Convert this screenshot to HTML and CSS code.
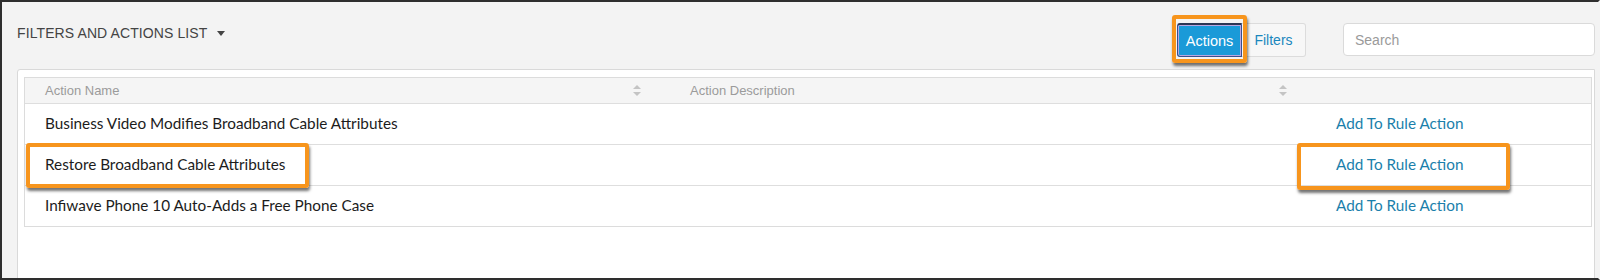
FILE: index.html
```html
<!DOCTYPE html>
<html>
<head>
<meta charset="utf-8">
<link rel="stylesheet" href="styles.css">
</head>
<body>
<div class="frame">
  <header class="topbar">
    <div class="title">FILTERS AND ACTIONS LIST <span class="caret"></span></div>
    <div class="btn-group">
      <button class="btn btn-active">Actions</button>
      <button class="btn">Filters</button>
    </div>
    <input class="search" type="text" placeholder="Search">
  </header>
  <section class="card">
    <div class="table">
      <div class="row head">
        <div class="cell">Action Name
          <svg class="sort" width="8" height="11" viewBox="0 0 8 11"><path d="M4 0 L8 4 L0 4 Z M0 7 L8 7 L4 11 Z" fill="#c4c4c4"/></svg>
        </div>
        <div class="cell">Action Description
          <svg class="sort" width="8" height="11" viewBox="0 0 8 11"><path d="M4 0 L8 4 L0 4 Z M0 7 L8 7 L4 11 Z" fill="#c4c4c4"/></svg>
        </div>
        <div class="cell"></div>
      </div>
      <div class="row">
        <div class="cell name">Business Video Modifies Broadband Cable Attributes</div>
        <div class="cell"></div>
        <div class="cell link">Add To Rule Action</div>
      </div>
      <div class="row">
        <div class="cell name">Restore Broadband Cable Attributes</div>
        <div class="cell"></div>
        <div class="cell link">Add To Rule Action</div>
      </div>
      <div class="row">
        <div class="cell name">Infiwave Phone 10 Auto-Adds a Free Phone Case</div>
        <div class="cell"></div>
        <div class="cell link">Add To Rule Action</div>
      </div>
    </div>
  </section>
  <div class="callout callout-actions"></div>
  <div class="callout callout-name"></div>
  <div class="callout callout-link"></div>
</div>
</body>
</html>
```

FILE: styles.css
```css
* { box-sizing: border-box; }
html, body { margin: 0; padding: 0; }
body {
  width: 1600px;
  height: 280px;
  overflow: hidden;
  background: #f3f3f3;
  font-family: "Liberation Sans", Arial, sans-serif;
}
.frame {
  position: relative;
  width: 1600px;
  height: 280px;
  border: 2px solid #2e2e2e;
  border-right: 2px solid #f3f3f3;
  background: #f3f3f3;
  overflow: hidden;
}
.topbar {
  display: flex;
  align-items: flex-start;
  padding: 21px 0 0 15px;
  height: 66px;
}
.title {
  font-size: 14px;
  letter-spacing: 0.1px;
  line-height: 18px;
  color: #444;
  display: flex;
  align-items: center;
  margin-top: 1px;
}
.caret {
  display: inline-block;
  width: 0;
  height: 0;
  margin-left: 10px;
  border-left: 4px solid transparent;
  border-right: 4px solid transparent;
  border-top: 5px solid #444;
}
.btn-group {
  display: flex;
  margin-left: auto;
  height: 34px;
}
.btn {
  font-family: "Liberation Sans", Arial, sans-serif;
  font-size: 14px;
  height: 34px;
  padding: 0 11px;
  border: 1px solid #dcdcdc;
  background: #f7f7f7;
  color: #1a87bd;
  margin: 0;
}
.btn-active {
  width: 65px;
  padding: 0;
  background: #1a9ad8;
  color: #fff;
  font-size: 14.5px;
  border: 1px solid #3a4f8c;
  border-top: 2px solid #2b3553;
  box-shadow: inset 0 0 0 1px #b9a6e0;
  border-radius: 3px 0 0 3px;
}
.btn + .btn {
  border-left: none;
  width: 64px;
  border-radius: 0 3px 3px 0;
}
.search {
  margin-left: 37px;
  margin-right: 3px;
  width: 252px;
  height: 33px;
  border: 1px solid #dadada;
  border-radius: 4px;
  background: #fff;
  padding: 0 11px;
  font-family: "Liberation Sans", Arial, sans-serif;
  font-size: 14px;
  flex-shrink: 0;
}
.search::placeholder { color: #9a9a9a; }
.card {
  margin-left: 15px;
  margin-top: 1px;
  width: 1578px;
  height: 220px;
  background: #fff;
  border: 1px solid #d9d9d9;
  border-radius: 3px 0 0 0;
  padding: 7px 0 0 6px;
}
.table {
  width: 1568px;
  border: 1px solid #dcdcdc;
}
.row {
  display: grid;
  grid-template-columns: 645px 646px 1fr;
  height: 41px;
  align-items: center;
  border-top: 1px solid #dedede;
}
.row.head {
  height: 25px;
  background: #f5f5f5;
  border-top: none;
}
.cell {
  padding-left: 20px;
  position: relative;
  height: 100%;
  display: flex;
  align-items: center;
}
.head .cell {
  font-size: 13px;
  color: #9b9b9b;
}
.sort {
  position: absolute;
  right: 29px;
  top: 7px;
}
.name, .link {
  font-family: Lato, "Liberation Sans", sans-serif;
  font-size: 15.3px;
  color: #1c1c1c;
  padding-bottom: 3px;
}
.link {
  color: #1b7fab;
}
.callout {
  position: absolute;
  border: 4px solid #f7951d;
  border-radius: 3px;
  box-shadow: 1px 3px 3px rgba(0, 0, 0, 0.55);
}
.callout-actions {
  left: 1170px;
  top: 13px;
  width: 75px;
  height: 48px;
}
.callout-name {
  left: 24px;
  top: 141px;
  width: 283px;
  height: 45px;
}
.callout-link {
  left: 1295px;
  top: 141px;
  width: 213px;
  height: 47px;
}
```
